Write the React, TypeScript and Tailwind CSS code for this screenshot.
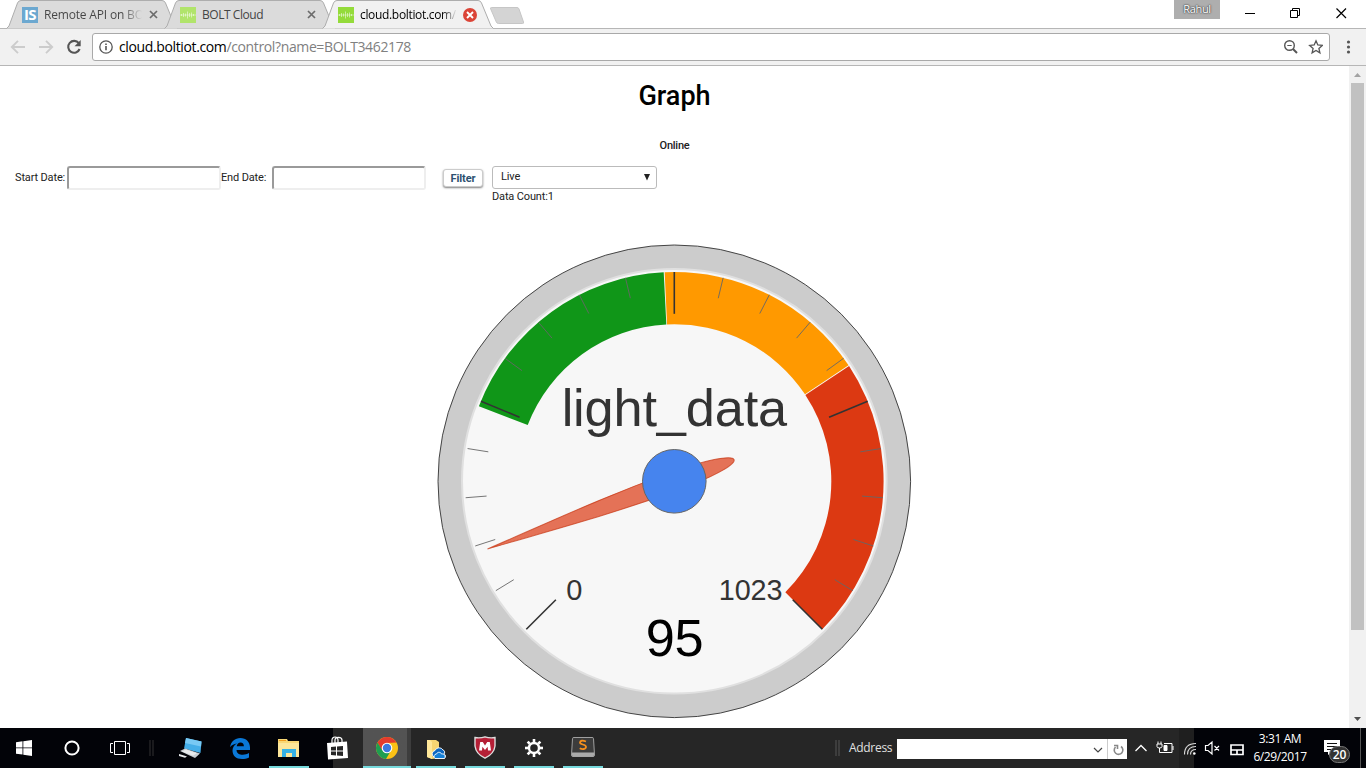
import React from 'react';

const UI = "font-['Open_Sans','Noto_Sans',sans-serif]";

type Icon = { className?: string };

const TabShape = ({ fill }: { fill: string }) => (
  <svg className="absolute inset-0 -z-10" width="172" height="29" viewBox="0 0 172 29">
    <path d="M0.5 28.5 L3 26 L11.5 3 Q12.5 0.5 15 0.5 L156 0.5 Q158.5 0.5 159.5 3 L169 26 L171.5 28.5 Z" fill={fill} />
    <path d="M0.5 28.5 L3 26 L11.5 3 Q12.5 0.5 15 0.5 L156 0.5 Q158.5 0.5 159.5 3 L169 26 L171.5 28.5" fill="none" stroke="#adadad" />
  </svg>
);

const BoltIcon = ({ faded }: { faded?: boolean }) => (
  <svg width="16" height="16" viewBox="0 0 16 16" className="shrink-0">
    <rect width="16" height="16" fill={faded ? '#b1e46b' : '#94db3a'} />
    <path d="M1.5 7v2M3.5 6v4M5.5 6.500v3M7.5 4.500v7M9.500 6v4M11.500 5.500v5M13.500 7v2" stroke="#fff" opacity=".5" />
    <path d="M0 8h16" stroke="#fff" opacity=".4" />
  </svg>
);

const InstructablesIcon = () => (
  <span className="flex h-4 w-4 shrink-0 items-center justify-center bg-[#6ca8d0] font-['Open_Sans',sans-serif] text-[15px] font-bold leading-none tracking-[-0.5px] text-white">IS</span>
);

const TabClose = ({ className }: Icon) => (
  <svg width="9" height="9" viewBox="0 0 9 9" className={className}>
    <path d="M1 1l7 7M8 1l-7 7" stroke="#6b6b6b" strokeWidth="1.7" />
  </svg>
);

const TabStrip = () => (
  <div className={`flex h-[28px] items-start bg-white text-[12px] ${UI}`}>
    <div className="isolate relative ml-[6px] flex h-[29px] w-[172px] items-center pl-4">
      <TabShape fill="#dbdbdb" />
      <InstructablesIcon />
      <span className="ml-[6px] w-[98px] whitespace-nowrap bg-linear-to-r from-[#444] from-80% to-transparent bg-clip-text text-transparent tracking-[-0.18px]">Remote API on BO</span>
      <TabClose className="ml-[7px]" />
    </div>
    <div className="isolate relative -ml-[14px] flex h-[29px] w-[172px] items-center pl-4">
      <TabShape fill="#dbdbdb" />
      <BoltIcon faded />
      <span className="ml-[6px] w-[98px] whitespace-nowrap text-[#444] tracking-[-0.45px]">BOLT Cloud</span>
      <TabClose className="ml-[7px]" />
    </div>
    <div className="isolate relative -ml-[14px] flex h-[29px] w-[172px] items-center pl-4">
      <TabShape fill="#f1f1f1" />
      <BoltIcon />
      <span className="ml-[6px] w-[97px] whitespace-nowrap bg-linear-to-r from-black from-85% to-transparent bg-clip-text text-transparent tracking-[-0.33px]">cloud.boltiot.com/</span>
      <svg width="14" height="14" viewBox="0 0 14 14" className="ml-[6px]">
        <circle cx="7" cy="7" r="7" fill="#db4437" />
        <path d="M4 4l6 6M10 4l-6 6" stroke="#fff" strokeWidth="1.9" />
      </svg>
    </div>
    <svg width="36" height="19" viewBox="0 0 36 19" className="-ml-[5px] mt-[6px]">
      <path d="M2.500 1.500H28Q29.500 1.500 30 3l4.500 13q.5 1.500-1 1.500H9.500Q8 17.500 7.300 16L1.700 3Q1 1.500 2.500 1.500Z" fill="#d4d4d4" stroke="#c6c6c6" />
    </svg>
    <div className="ml-auto flex h-[28px] items-start">
      <div className="h-[19px] w-[46px] bg-[#aeaeae] text-center text-[11px] leading-[17px] tracking-[-0.3px] text-white [text-shadow:0_0_2px_#222,0_0_1px_#444]">Rahul</div>
      <svg width="146" height="28" viewBox="0 0 146 28" fill="none" stroke="#000">
        <path d="M25 13.500h10" />
        <path d="M70.500 10.500h7v7h-7zM72.500 10V8.500h7v7H78" />
        <path d="M116.500 8.500l9.500 9.500M126 8.500l-9.500 9.500" strokeWidth="1.200" />
      </svg>
    </div>
  </div>
);

const Toolbar = () => (
  <div className={`flex h-[38px] items-center border-y border-[#b6b6b6] bg-[#f1f1f1] ${UI}`}>
    <svg width="92" height="36" viewBox="0 0 92 36" fill="none" className="shrink-0">
      <path d="M25 18H12.500M18 11.800L11.800 18l6.200 6.200" stroke="#ccc" strokeWidth="1.900" />
      <path d="M39 18h12.500M46 11.800l6.200 6.200-6.200 6.200" stroke="#ccc" strokeWidth="1.900" />
      <path d="M78.800 14.200A5.900 5.900 0 1 0 79.600 20" stroke="#555" strokeWidth="2.100" />
      <path d="M80.700 11v6.200h-6.200z" fill="#555" />
    </svg>
    <div className="flex h-[28px] w-[1238px] items-center rounded-[3px] border border-[#a9a9a9] bg-white pl-[6px] pr-[6px]">
      <svg width="14" height="14" viewBox="0 0 14 14" fill="none" stroke="#555" className="shrink-0">
        <circle cx="7" cy="7" r="6.200" strokeWidth="1.300" />
        <path d="M7 6v4.300M7 3.500v1.500" strokeWidth="1.600" />
      </svg>
      <span className="-mt-px ml-[6px] whitespace-nowrap text-[14px] tracking-[-0.37px] text-[#808080]"><span className="text-black">cloud.boltiot.com</span>/control?name=BOLT3462178</span>
      <svg width="40" height="16" viewBox="0 0 40 16" fill="none" stroke="#555" className="ml-auto shrink-0">
        <circle cx="6.500" cy="6.500" r="4.800" strokeWidth="1.400" />
        <path d="M4.300 6.500h4.400" strokeWidth="1" />
        <path d="M10 10l4 4" strokeWidth="1.900" />
        <path d="M33 1.800l1.800 4.200 4.500.4-3.400 3 1 4.400-3.900-2.400-3.900 2.400 1-4.400-3.400-3 4.500-.4z" strokeWidth="1.300" />
      </svg>
    </div>
    <svg width="36" height="36" viewBox="0 0 36 36" fill="#555">
      <circle cx="18.500" cy="13" r="1.600" /><circle cx="18.500" cy="18" r="1.600" /><circle cx="18.500" cy="23" r="1.600" />
    </svg>
  </div>
);

const CX = 237.3;
const CY = 237.3;
const MAX = 1023;
const angleOf = (v: number) => ((-135 + (270 * v) / MAX) * Math.PI) / 180;
const pt = (r: number, a: number) => `${(CX + r * Math.sin(a)).toFixed(2)} ${(CY - r * Math.cos(a)).toFixed(2)}`;
const band = (from: number, to: number) => {
  const a = angleOf(from);
  const b = angleOf(to);
  return `M${pt(209.3, a)}A209.3 209.3 0 0 1 ${pt(209.3, b)}L${pt(157, b)}A157 157 0 0 0 ${pt(157, a)}Z`;
};

const Gauge = ({ value }: { value: number }) => (
  <svg width="475" height="475" viewBox="0 0 475 475" className="font-['Liberation_Sans',Arial,sans-serif]">
    <circle cx={CX} cy={CY} r="236.300" fill="#ccc" stroke="#333" strokeWidth="0.900" />
    <circle cx={CX} cy={CY} r="212.300" fill="#f7f7f7" stroke="#e0e0e0" strokeWidth="2" />
    <path d={band(250, 500.5)} fill="#109618" />
    <path d={band(501.5, 725)} fill="#ff9900" />
    <path d={band(726, 1023)} fill="#dc3912" />
    {Array.from({ length: 21 }, (_, i) => {
      const major = i % 5 === 0;
      const a = ((-135 + i * 13.5) * Math.PI) / 180;
      return (
        <path key={i} d={`M${pt(209.3, a)}L${pt(major ? 167.5 : 188.3, a)}`} stroke={major ? '#333' : '#666'} strokeWidth={major ? 1.6 : 0.9} />
      );
    })}
    <text x={CX} y="181.700" textAnchor="middle" fontSize="52.300" fill="#333">light_data</text>
    <text x="129.300" y="356" fontSize="29" fill="#333">0</text>
    <text x="345.300" y="356" fontSize="28.800" textAnchor="end" fill="#333">1023</text>
    <text x={CX + 0.3} y="412.300" textAnchor="middle" fontSize="52.300" fill="#000">{value}</text>
    <g transform={`translate(${CX} ${CY}) rotate(${-135 + (270 * value) / MAX + 90})`}>
      <path d="M-198.700 0C-120 -5 -70 -9.500 0 -9.500C35 -9.500 63.600 -5.500 63.600 0C63.600 5.500 35 9.500 0 9.500C-70 9.500 -120 5 -198.700 0Z" fill="#dc3912" fillOpacity=".7" stroke="#c63310" strokeOpacity=".7" />
    </g>
    <circle cx={CX} cy={CY} r="31.800" fill="#4684ee" stroke="#666" />
  </svg>
);

const DateField = () => (
  <input className="h-[24px] w-[154px] rounded-[3px] border-2 border-[#eee] border-t-[#9a9a9a] border-l-[#9a9a9a] bg-white" />
);

const Page = () => (
  <main className="h-[662px] w-[1349px] overflow-hidden bg-white font-[Roboto,sans-serif] text-[11px] tracking-[-0.15px] text-[#222]">
    <h1 className="pt-[13px] text-center text-[27px] font-medium leading-[34px] tracking-normal text-black">Graph</h1>
    <p className="mt-[25px] text-center font-medium leading-[16px] tracking-[-0.25px]">Online</p>
    <div className="mt-[12px] flex h-[44px] items-start pl-[15px]">
      <span className="w-[52px] whitespace-nowrap leading-[24px]">Start Date:</span>
      <DateField />
      <span className="w-[51px] whitespace-nowrap leading-[24px]">End Date:</span>
      <DateField />
      <button className="ml-[17px] mt-[3px] h-[18px] w-[40px] rounded-[3px] border border-[#ccc] bg-white text-[11px] font-bold leading-[15px] tracking-[-0.1px] text-[#2d5070] shadow-[0_1px_2px_rgba(0,0,0,.5)]">Filter</button>
      <div className="ml-[9px]">
        <div className="flex h-[23px] w-[165px] items-center justify-between rounded-[3px] border border-[#bbb] bg-white pl-2 pr-[5px]">
          <span>Live</span>
          <svg width="8" height="7" viewBox="0 0 8 7"><path d="M1 0h6L4 6.500z" fill="#222" /></svg>
        </div>
        <p className="leading-[15px]">Data Count:1</p>
      </div>
    </div>
    <div className="mt-[34px] flex pl-[437px]">
      <Gauge value={95} />
    </div>
  </main>
);

const Scrollbar = () => (
  <div className="flex h-[662px] w-[17px] flex-col items-center bg-[#f1f1f1]">
    <svg width="17" height="17" viewBox="0 0 17 17"><path d="M5 11h7L8.500 7z" fill="#a3a3a3" /></svg>
    <div className="h-[547px] w-[13px] bg-[#c1c1c1]" />
    <svg width="17" height="17" viewBox="0 0 17 17" className="mt-auto"><path d="M5 6h7L8.500 10z" fill="#505050" /></svg>
  </div>
);

const Slot = ({ children, className = '' }: { children: React.ReactNode; className?: string }) => (
  <div className={`flex h-10 items-center justify-center ${className}`}>{children}</div>
);

const Taskbar = () => (
  <footer className={`flex h-10 bg-[linear-gradient(90deg,#020308_0,#020308_333px,#262626_333px,#262626_1179px,#1f1f1f_1179px,#1f1f1f_1194px,#020308_1194px)] text-[12px] text-white ${UI}`}>
    <Slot className="w-12">
      <svg width="16" height="16" viewBox="0 0 16 16" fill="#fff"><path d="M0 2.200L6.500 1.300v6.200H0zM7.300 1.200L16 0v7.500H7.300zM0 8.300h6.500v6.300L0 13.700zM7.300 8.300H16V16l-8.700-1.200z" /></svg>
    </Slot>
    <Slot className="w-12">
      <svg width="16" height="16" viewBox="0 0 16 16"><circle cx="8" cy="8" r="6.600" fill="none" stroke="#fff" strokeWidth="2" /></svg>
    </Slot>
    <Slot className="w-12">
      <svg width="20" height="14" viewBox="0 0 20 14" fill="none" stroke="#fff"><path d="M4.500.5h11v13h-11zM3 2.500H.5v9H3M17 2.500h2.500v9H17" /></svg>
    </Slot>
    <Slot className="w-[15px]">
      <svg width="5" height="16" viewBox="0 0 5 16" stroke="#333"><path d="M1 0v16M4 0v16" /></svg>
    </Slot>
    <Slot className="w-[63px]">
      <svg width="24" height="22" viewBox="0 0 24 22">
        <path d="M7 1l15.500 3.500L21.500 16 5 11.500z" fill="#45aee8" /><path d="M7 1l15.500 3.500-.5 5L6 6z" fill="#78c9f4" />
        <path d="M1 14l5-2.500 15 5L16 21z" fill="#c9ced2" /><path d="M3 14.500l4-2 11 3.800-4 2.500zM0 17l5 1.500 3 1-2 1.200L0 19z" fill="#e8eaec" />
      </svg>
    </Slot>
    <Slot className="w-[36px]">
      <svg width="20" height="21" viewBox="0 0 20 21"><path d="M0 9.200C1 3.500 5 0 10.300 0 16.300 0 20 4.200 20 9.600V12H6.500c.2 3.300 3 4.800 6.300 4.800 2.300 0 4.300-.6 6.200-1.700v4.300c-2 1.100-4.500 1.600-7 1.600-6 0-9.500-3.500-9.500-8.500C2.500 9.500 4 7 7 5.400 4 5.700 1.600 7 0 9.200zM6.700 8.300h7.200c0-2.300-1.200-3.700-3.400-3.700-2 0-3.400 1.400-3.800 3.700z" fill="#0a78d7" /></svg>
    </Slot>
    <Slot className="ml-[11px] w-10 border-b-2 border-[#76d9dc]">
      <svg width="22" height="19" viewBox="0 0 22 19" className="mt-[2px]"><path d="M0 0h9l1 2h11v16H0z" fill="#f8d775" /><path d="M0 4h21v14H0z" fill="#fce69a" /><path d="M4 18v-8h14v8h-4v-4H8v4z" fill="#35b1e5" /><path d="M1 1h7v1H1z" fill="#f09d1e" /></svg>
    </Slot>
    <Slot className="ml-[8px] w-10">
      <svg width="22" height="24" viewBox="0 0 22 24" className="ml-px"><path d="M5 7V4c0-4 6-4 6 0v3M8 7V4c0-4 7-3 7 0v3" fill="none" stroke="#fff" strokeWidth="1.200" /><path d="M0 7l20-1.500 1 16.500-20 1.500z" fill="#fff" /><path d="M4 11l5-.5v4H4zM10 10.500l6-.5v4.500h-6zM4 15.500h5v4l-5-.5zM10 15.500h6v4.500l-6-.5z" fill="#262626" /></svg>
    </Slot>
    <Slot className="ml-[6px] w-[48px] border-b-2 border-[#76d9dc] bg-linear-to-r from-[#535353] from-92% to-[#3d3d3d] to-92%">
      <svg width="22" height="22" viewBox="0 0 22 22" className="mr-[1px] mt-[2px]">
        <circle cx="11" cy="11" r="11" fill="#fbc116" />
        <path d="M1.500 5.500A11 11 0 0 1 20.500 5.500L11 6l-5 8z" fill="#e33b2e" />
        <path d="M1.500 5.500A11 11 0 0 0 10 22l5-8.500L6 13z" fill="#1e9e51" />
        <circle cx="11" cy="11" r="5.300" fill="#fff" /><circle cx="11" cy="11" r="4.200" fill="#3b78e0" />
      </svg>
    </Slot>
    <Slot className="ml-[5px] w-10 border-b-2 border-[#76d9dc]">
      <svg width="20" height="20" viewBox="0 0 20 20" className="mt-[3px]"><path d="M1 1h9l3 2v16l-7 1-5-2z" fill="#f6d572" /><path d="M1 1h3l2 2v17l-5-2z" fill="#ffe799" /><path d="M8 18a3.500 3.500 0 0 1 1-6.500A4.500 4.500 0 0 1 17 11c2 .5 2 3 1 4 2 1 2 4 0 4H10z" fill="#0c66bf" stroke="#fff" strokeWidth=".9" /><path d="M9 19.500a2.500 2.500 0 0 1 1.500-4.500c1-2.500 4.500-2 5 0 3-.5 4.500 2 3 4.500z" fill="#1480d8" stroke="#fff" strokeWidth=".9" /></svg>
    </Slot>
    <Slot className="ml-[9px] w-10 border-b-2 border-[#76d9dc]">
      <svg width="22" height="23" viewBox="0 0 22 23" className="mr-px"><path d="M1 1.500Q6 2.500 11 .8q5 1.700 10 .7V10q-1 8-10 12.200Q2 18 1 10z" fill="#b51f36" stroke="#ddd" strokeWidth="1.400" /><path d="M5 14.500L6.200 6h2.600L11 9.500 13.200 6h2.600L17 14.500h-3l-.4-3.700L11 14l-2.600-3.200-.4 3.700z" fill="#fff" /></svg>
    </Slot>
    <Slot className="ml-[9px] w-10 border-b-2 border-[#76d9dc]">
      <svg width="20" height="20" viewBox="-10 -10 20 20" className="mt-[2px]" stroke="#fff">
        <circle r="5" fill="none" strokeWidth="2.400" />
        {[0, 45, 90, 135, 180, 225, 270, 315].map((d) => <path key={d} d="M0 -6v-3" strokeWidth="2.600" transform={`rotate(${d})`} />)}
      </svg>
    </Slot>
    <Slot className="ml-[9px] w-10 border-b-2 border-[#76d9dc]">
      <svg width="24" height="20" viewBox="0 0 24 20"><path d="M1.500 1.500Q1.500.5 3 .5h18q1.500 0 1.500 1L23.500 18q0 1.500-1.500 1.500H2Q.5 19.500.5 18z" fill="#3c3c3c" stroke="#a0a0a0" /><path d="M1 15.500h22V18q0 1.500-1.500 1.500h-19Q1 19.500 1 18z" fill="#aaa" /><path d="M15 4.500Q9.500 2.500 9 5.500c0 2.500 6 1.500 6 4.300 0 2.700-4 2.700-6.300 1.400" fill="none" stroke="#f58f1d" strokeWidth="1.800" /></svg>
    </Slot>

    <div className="ml-auto flex h-10 items-center">
      <svg width="5" height="16" viewBox="0 0 5 16" stroke="#555"><path d="M1 0v16M4 0v16" /></svg>
      <span className="ml-[9px] w-[48px] whitespace-nowrap tracking-[-0.3px] text-[#e0e0e0]">Address</span>
      <div className="mt-[2px] flex h-5 w-[230px] items-center justify-end bg-white">
        <svg width="34" height="20" viewBox="0 0 34 20" fill="none"><path d="M1 9l4 4 4-4" stroke="#444" strokeWidth="1.200" /><path d="M14.500 0v20" stroke="#ccc" /><path d="M28 7.500a4.300 4.300 0 1 1-5.500.5M21 6.500h3.500V10" stroke="#888" strokeWidth="1.600" /></svg>
      </div>
      <svg width="120" height="40" viewBox="0 0 120 40" fill="none" stroke="#fff">
        <path d="M8.500 23l5.500-5.500 5.500 5.500" strokeWidth="1.300" />
        <path d="M37 15.500h8v9H33M46 18v4M30 16h5v2.500q0 1.500-2.500 1.500T30 18.500zM31 13.500V16M34 13.500V16M32.500 20v4.500H36" />
        <path d="M37 17.500h3v5h-3z" fill="#fff" />
        <path d="M57.500 26.500q0-11 11.500-11M60.500 26.500q0-8 8.500-8M63.500 26.500q0-5 5.500-5" stroke="#ddd" strokeWidth="1.100" /><circle cx="67.300" cy="25.500" r="1.300" fill="#fff" stroke="none" />
        <path d="M78.500 17.500H81l4-3.500v12l-4-3.500h-2.500zM87.500 18l4.500 4.500M92 18l-4.500 4.500" strokeWidth="1.200" />
        <path d="M104 17h12v9.500h-12zM104 22h12M110 22v4.500" strokeWidth="1.700" />
      </svg>
      <div className="ml-[2px] w-[62px] text-center leading-[18px] tracking-[-0.4px]"><div>3:31 AM</div><div>6/29/2017</div></div>
      <div className="relative ml-[13px] h-10 w-[36px]">
        <svg width="36" height="40" viewBox="0 0 36 40"><path d="M0 12h16v12H8l-4 3v-3H0z" fill="#fff" /><path d="M3 15.500h10M3 18.500h10M3 21.500h6" stroke="#111" /></svg>
        <div className="absolute left-[5px] top-[18px] flex h-[17px] w-[21px] items-center justify-center rounded-full border border-[#777] bg-[#333] text-[12px] font-semibold leading-none tracking-[-0.2px]">20</div>
      </div>
      <div className="h-10 w-[6px] border-l border-[#555]" />
    </div>
  </footer>
);

export default function App() {
  return (
    <div className="h-[768px] w-[1366px] overflow-hidden bg-white">
      <TabStrip />
      <Toolbar />
      <div className="flex">
        <Page />
        <Scrollbar />
      </div>
      <Taskbar />
    </div>
  );
}
